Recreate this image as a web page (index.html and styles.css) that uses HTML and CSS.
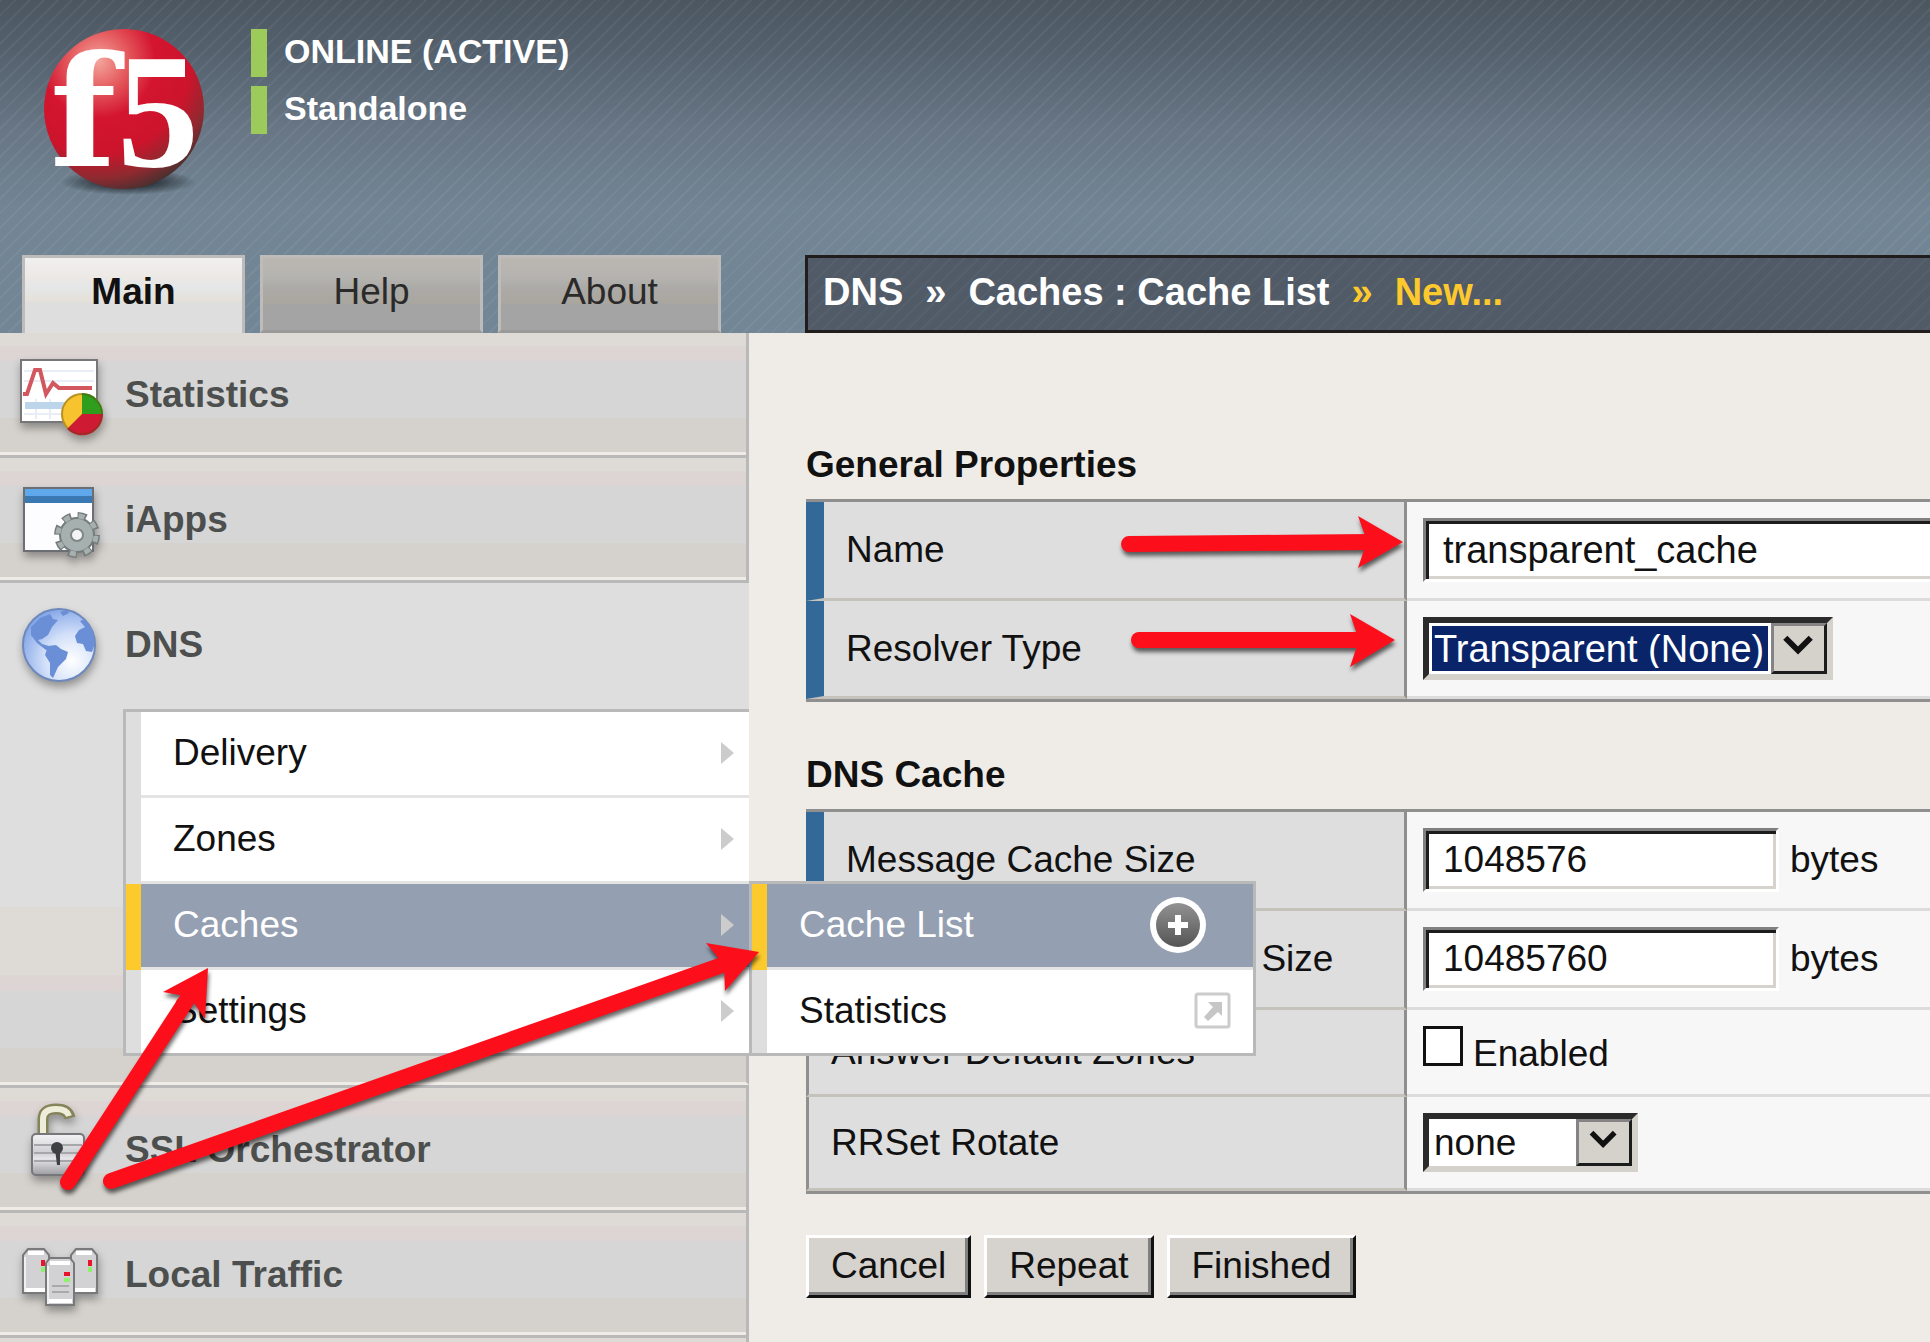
FILE: index.html
```html
<!DOCTYPE html>
<html lang="en">
<head>
<meta charset="utf-8">
<title>DNS : Caches : Cache List : New</title>
<link rel="stylesheet" href="styles.css">
</head>
<body>
<div class="page">
  <header class="banner">
    <div class="brand">
      <svg class="logo" viewBox="0 0 176 176" role="img" aria-label="f5">
        <defs>
          <radialGradient id="ball" cx="0.34" cy="0.2" r="0.85">
            <stop offset="0" stop-color="#f4a59c"/>
            <stop offset="0.22" stop-color="#e4585c"/>
            <stop offset="0.42" stop-color="#d41530"/>
            <stop offset="0.68" stop-color="#cc142c"/>
            <stop offset="0.86" stop-color="#8e2a30"/>
            <stop offset="1" stop-color="#43302f"/>
          </radialGradient>
          <radialGradient id="ballShade">
            <stop offset="0.3" stop-color="#1d242a" stop-opacity="0.9"/>
            <stop offset="1" stop-color="#1d242a" stop-opacity="0"/>
          </radialGradient>
        </defs>
        <ellipse cx="92" cy="158" rx="68" ry="13" fill="url(#ballShade)"/>
        <circle cx="88" cy="85" r="80" fill="url(#ball)"/>
        <g fill="#fff" font-weight="bold">
          <text x="14" y="142" font-size="154" font-family="'DejaVu Serif', serif">f</text>
          <text x="81" y="142" font-size="164" font-family="'Liberation Serif', serif">5</text>
        </g>
      </svg>
      <div class="status">
        <p>ONLINE (ACTIVE)</p>
        <p>Standalone</p>
      </div>
    </div>
    <nav class="tabs" aria-label="Sections">
      <a class="tab tab-active" href="#main">Main</a>
      <a class="tab" href="#help">Help</a>
      <a class="tab" href="#about">About</a>
    </nav>
    <nav class="crumbs" aria-label="Breadcrumb">
      <span>DNS</span><span>»</span><span>Caches : Cache List</span><span class="crumb-new">»</span><span class="crumb-new">New...</span>
    </nav>
  </header>

  <aside class="sidebar">
    <ul class="nav">
      <li class="nav-item">
        <a class="nav-link" href="#statistics">
          <svg class="nav-icon" viewBox="0 0 96 101" aria-hidden="true">
            <rect x="9" y="16" width="76" height="62" fill="#fff" stroke="#77777a" stroke-width="2"/>
            <path d="M12 27h70M12 37h70M12 70h50M24 55v20M38 55v20" stroke="#e9edf6" stroke-width="2"/>
            <rect x="13" y="58" width="40" height="7" fill="#bdd5ea"/>
            <path d="M11 50h4l8-24h5l6 24 7-11 6 5h33" fill="none" stroke="#d2575e" stroke-width="4"/>
            <circle cx="70" cy="70" r="21" fill="#f7c430"/>
            <path d="M70 70V49a21 21 0 0 1 21 21z" fill="#2f9e1c"/>
            <path d="M70 70h21a21 21 0 0 1-36 15z" fill="#cf1a33"/>
            <circle cx="70" cy="70" r="20" fill="none" stroke="#5a4414" stroke-opacity="0.4" stroke-width="2"/>
          </svg>
          <span>Statistics</span>
        </a>
      </li>
      <li class="nav-item">
        <a class="nav-link" href="#iapps">
          <svg class="nav-icon" viewBox="0 0 96 101" aria-hidden="true">
            <rect x="12" y="19" width="69" height="63" fill="#fdfcff" stroke="#6b6e72" stroke-width="2"/>
            <rect x="13" y="20" width="67" height="7" fill="#5fa8ec"/>
            <rect x="13" y="27" width="67" height="7" fill="#3a78b4"/>
            <circle cx="65" cy="66" r="20" fill="none" stroke="#747b7b" stroke-width="6" stroke-dasharray="9 6.71"/>
            <circle cx="65" cy="66" r="17" fill="#a6b0af" stroke="#747b7b" stroke-width="2"/>
            <circle cx="65" cy="66" r="19" fill="none" stroke="#a6b0af" stroke-width="5" stroke-dasharray="6 8.92" stroke-dashoffset="-1"/>
            <circle cx="65" cy="66" r="6" fill="#f4f4f6" stroke="#7e8686" stroke-width="2"/>
          </svg>
          <span>iApps</span>
        </a>
      </li>
      <li class="nav-item nav-open">
        <a class="nav-link" href="#dns">
          <svg class="nav-icon" viewBox="0 0 96 101" aria-hidden="true">
            <defs>
              <radialGradient id="sea" cx="0.68" cy="0.72" r="0.75">
                <stop offset="0" stop-color="#fff"/>
                <stop offset="0.5" stop-color="#d3e0f9"/>
                <stop offset="1" stop-color="#86a8e8"/>
              </radialGradient>
            </defs>
            <circle cx="47" cy="51" r="36" fill="url(#sea)" stroke="#6d88bd" stroke-width="2"/>
            <path d="M19 33l9-9 10-4 3 5 5 1-6 7-4 8-6 4-4 1 4 4 7 2 2 5-5-1-9-7-6-8zM48 18l7-2 2 3-6 3zM36 52l8-1 5 4 7 3-2 7-8 8-5 11-3-3 0-12-5-8zM68 27l5-2 8 12 2 12-3 9-6-1-3-7-6-1-2-7 4-6 6-3z" fill="#6a8fd6"/>
          </svg>
          <span>DNS</span>
        </a>
        <ul class="menu">
          <li class="menu-item"><a href="#delivery">Delivery<i class="caret"></i></a></li>
          <li class="menu-item"><a href="#zones">Zones<i class="caret"></i></a></li>
          <li class="menu-item menu-selected"><a href="#caches">Caches<i class="caret"></i></a>
            <ul class="menu flyout">
              <li class="menu-item menu-selected"><a href="#cache-list">Cache List
                <svg class="add" viewBox="0 0 56 56" aria-hidden="true">
                  <defs><linearGradient id="disc" x2="0" y2="1"><stop stop-color="#929292"/><stop offset="1" stop-color="#555"/></linearGradient></defs>
                  <circle cx="28" cy="28" r="28" fill="#fff"/>
                  <circle cx="28" cy="28" r="22" fill="url(#disc)"/>
                  <path d="M28 18v20M18 28h20" stroke="#fff" stroke-width="6"/>
                </svg></a></li>
              <li class="menu-item"><a href="#cache-statistics">Statistics
                <svg class="external" viewBox="0 0 37 37" aria-hidden="true">
                  <rect x="2" y="2" width="33" height="33" rx="2" fill="#fff" stroke="#ccc" stroke-width="3"/>
                  <path d="M14 10h14v14l-4-4-10 9-4-4 9-10z" fill="#c6c6c6"/>
                </svg></a></li>
            </ul>
          </li>
          <li class="menu-item"><a href="#settings">Settings<i class="caret"></i></a></li>
        </ul>
      </li>
      <li class="nav-item">
        <a class="nav-link" href="#ssl">
          <svg class="nav-icon" viewBox="0 0 96 101" aria-hidden="true">
            <defs>
              <linearGradient id="metal" x2="0" y2="1"><stop stop-color="#f4f4f6"/><stop offset="0.45" stop-color="#cfcfd3"/><stop offset="0.6" stop-color="#e6e6ea"/><stop offset="1" stop-color="#9d9da1"/></linearGradient>
            </defs>
            <path d="M31 36V20q0-10 13-10 12 0 14 9" fill="none" stroke="#84835a" stroke-width="11"/>
            <path d="M31 36V20q0-10 13-10 11 0 13 7" fill="none" stroke="#eeedd9" stroke-width="6"/>
            <rect x="20" y="35" width="52" height="41" rx="4" fill="url(#metal)" stroke="#77777b" stroke-width="2"/>
            <path d="M22 46h48M22 54h48M22 62h48" stroke="#a6a6ab" stroke-width="2"/>
            <circle cx="45" cy="49" r="6" fill="#3f4044"/><path d="M43 50h5v16h-3z" fill="#3f4044"/>
          </svg>
          <span>SSL Orchestrator</span>
        </a>
      </li>
      <li class="nav-item">
        <a class="nav-link" href="#local-traffic">
          <svg class="nav-icon" viewBox="0 0 96 101" aria-hidden="true">
            <g stroke="#77797a" stroke-width="2" fill="#d2d2d4">
              <path d="M11 69V31l5-6h16l5 6v38z"/>
              <path d="M59 69V31l5-6h16l5 6v38z"/>
              <path d="M34 81V39l4-5h20l4 5v42z"/>
            </g>
            <path d="M13 66h20M63 66h20M36 77h24M16 29h16M64 29h16M38 39h20" stroke="#fff" stroke-width="4" fill="none"/>
            <path d="M13 68V33M36 80V42" stroke="#f0f0f2" stroke-width="2"/>
            <path d="M40 62h17M40 68h17" stroke="#a9a9ab" stroke-width="2"/>
            <path d="M29 36h4v6h-4zM76 36h4v6h-4zM52 48h6v4h-6z" fill="#e8142e"/>
            <path d="M29 43h4v5h-4zM76 43h4v5h-4zM52 54h6v4h-6z" fill="#8ef06c"/>
          </svg>
          <span>Local Traffic</span>
        </a>
      </li>
    </ul>
  </aside>

  <main class="content">
    <form>
      <h2>General Properties</h2>
      <table class="props">
        <tr>
          <th class="required" scope="row"><label for="name">Name</label></th>
          <td><input class="field field-wide" id="name" type="text" value="transparent_cache"></td>
        </tr>
        <tr>
          <th class="required" scope="row"><label for="resolver">Resolver Type</label></th>
          <td>
            <span class="picker picker-focus">
              <select id="resolver"><option>Transparent (None)</option></select>
              <svg class="picker-arrow" viewBox="0 0 50 46" aria-hidden="true"><path d="M11 12l13 13 13-13" fill="none" stroke="#111" stroke-width="6"/></svg>
            </span>
          </td>
        </tr>
      </table>

      <h2>DNS Cache</h2>
      <table class="props">
        <tr>
          <th class="required" scope="row"><label for="message-size">Message Cache Size</label></th>
          <td><span class="line"><input class="field" id="message-size" type="text" value="1048576"><span>bytes</span></span></td>
        </tr>
        <tr>
          <th class="required" scope="row"><label for="record-size">Resource Record Cache Size</label></th>
          <td><span class="line"><input class="field" id="record-size" type="text" value="10485760"><span>bytes</span></span></td>
        </tr>
        <tr>
          <th scope="row">Answer Default Zones</th>
          <td><label class="check"><input type="checkbox">Enabled</label></td>
        </tr>
        <tr>
          <th scope="row"><label for="rotate">RRSet Rotate</label></th>
          <td>
            <span class="picker">
              <select id="rotate"><option>none</option></select>
              <svg class="picker-arrow" viewBox="0 0 50 46" aria-hidden="true"><path d="M11 12l13 13 13-13" fill="none" stroke="#111" stroke-width="6"/></svg>
            </span>
          </td>
        </tr>
      </table>

      <div class="actions">
        <button type="button">Cancel</button>
        <button type="button">Repeat</button>
        <button type="button">Finished</button>
      </div>
    </form>
  </main>

  <svg class="arrows" width="1420" height="1220" viewBox="0 0 1420 1220" aria-hidden="true">
    <g fill="#fc0f1b" stroke="#fc0f1b">
      <path d="M1129 544L1370 542" stroke-width="16" stroke-linecap="round"/>
      <path d="M1403 542L1358 516 1367 541 1358 568z" stroke="none"/>
      <path d="M1139 640H1362" stroke-width="16" stroke-linecap="round"/>
      <path d="M1395 640L1350 614 1359 640 1350 667z" stroke="none"/>
      <path d="M68 1182L192 992" stroke-width="16" stroke-linecap="round"/>
      <path d="M208 968L163 992 190 997 205 1019z" stroke="none"/>
      <path d="M111 1181L728 963" stroke-width="16" stroke-linecap="round"/>
      <path d="M759 952L706 943 724 965 725 991z" stroke="none"/>
    </g>
  </svg>
</div>
</body>
</html>
```
FILE: styles.css
```css
*,
*::before,
*::after {
  box-sizing: border-box;
}

body {
  margin: 0;
  background: #efebe6;
  color: #111;
  font: 37px/44px "Liberation Sans", Arial, sans-serif;
}

ul {
  margin: 0;
  padding: 0;
  list-style: none;
}

a {
  color: inherit;
  text-decoration: none;
}

.page {
  position: relative;
  display: grid;
  grid-template-columns: 749px 1fr;
  grid-template-rows: auto 1fr;
  min-height: 100vh;
  overflow: hidden;
}

/* Banner */

.banner {
  grid-column: 1 / -1;
  display: grid;
  grid-template-columns: 805px 1fr;
  background:
    repeating-linear-gradient(135deg, rgba(255, 255, 255, 0.05) 0 2px, transparent 2px 10px),
    linear-gradient(#4b5660 0, #566370 60px, #687685 130px, #728594 210px, #728696 100%);
}

.brand {
  grid-column: 1 / -1;
  display: flex;
  align-items: flex-start;
  gap: 39px;
  height: 255px;
  padding: 24px 36px 0;
}

.logo {
  width: 176px;
  height: 176px;
}

.status {
  display: grid;
  gap: 9px;
  padding-top: 5px;
  color: #fff;
  font-size: 34px;
  font-weight: bold;
}

.status p {
  height: 48px;
  margin: 0;
  padding-left: 17px;
  border-left: 16px solid #9ccb5b;
}

.tabs {
  display: flex;
  gap: 15px;
  padding-left: 22px;
}

.tab {
  width: 223px;
  height: 78px;
  padding-top: 12px;
  border: 3px solid #bdbcba;
  border-bottom-color: #999;
  background: linear-gradient(#bab7b1 0, #b5b3b0 20px, #acaaa7 30px, #aaa69f 45px, #a4a4a4 47px);
  color: #2a2a2a;
  text-align: center;
}

.tab-active {
  border-bottom: 0;
  background: linear-gradient(#f0f0f0 0, #ece8e6 20px, #e4e6e7 30px, #e6e1da 42px, #dedede 45px);
  color: #111;
  font-weight: bold;
}

.crumbs {
  display: flex;
  gap: 22px;
  padding: 12px 0 0 15px;
  border: 3px solid #201d1c;
  border-right: 0;
  background:
    repeating-linear-gradient(135deg, rgba(255, 255, 255, 0.03) 0 2px, transparent 2px 10px),
    #505b67;
  color: #fff;
  font-size: 38px;
  font-weight: bold;
  white-space: nowrap;
}

.crumb-new {
  color: #fdc92c;
}

/* Sidebar */

.sidebar {
  display: flex;
  flex-direction: column;
}

.sidebar::after {
  content: "";
  flex: 1;
  border-right: 3px solid #b9b9b9;
  background: #dedad5;
}

.nav-item {
  border: 0 solid #b9b9b9;
  border-width: 0 3px 3px 0;
  background: linear-gradient(#dedad5 13px, #ddd5d3 13px 28px, #d6d6d6 28px 85px, #d5d2cd 85px);
}

.nav-link {
  display: flex;
  align-items: center;
  gap: 17px;
  height: 122px;
  padding: 4px 0 0 12px;
  border-bottom: 3px solid #efebe6;
  color: #4c4f4d;
  font-weight: bold;
}

.nav-icon {
  width: 96px;
  height: 101px;
  filter: drop-shadow(1px 5px 4px rgba(0, 0, 0, 0.35));
}

.nav-open {
  border-right: 0;
  background: linear-gradient(#dedede 324px, #dedad5 324px 392px, #ddd5d3 392px 408px, #d6d6d6 408px 465px, #d5d2cd 465px);
}

.nav-open > .nav-link {
  height: 126px;
  padding-bottom: 7px;
  border-bottom: 0;
}

.nav-open::after {
  content: "";
  display: block;
  height: 29px;
  border-right: 3px solid #b9b9b9;
  border-bottom: 3px solid #efebe6;
}

/* Menus */

.menu {
  margin-left: 123px;
  border: 3px solid #b9b9b9;
  border-right: 0;
  background: #fff;
  color: #111;
}

.menu-item {
  position: relative;
  border-left: 15px solid #dedede;
}

.menu-item > a {
  display: flex;
  align-items: center;
  height: 86px;
  padding: 0 0 2px 32px;
  border-bottom: 3px solid #e4e4e4;
}

.menu-item:last-child > a {
  height: 83px;
  border-bottom: 0;
}

.menu-selected {
  border-left-color: #fdca2e;
}

.menu-selected > a {
  background: #94a0b2;
  color: #fff;
}

.caret {
  margin: 0 15px 0 auto;
  border: 11px solid transparent;
  border-right: 0;
  border-left: 13px solid #ccc;
}

.flyout {
  position: absolute;
  z-index: 1;
  top: -3px;
  left: 100%;
  width: 507px;
  margin: 0;
  border-right: 3px solid #b9b9b9;
}

.add {
  width: 56px;
  margin: 0 47px 0 auto;
}

.external {
  width: 37px;
  margin: 0 22px 0 auto;
}

/* Form */

.content {
  padding: 110px 0 0 57px;
}

h2 {
  margin: 0 0 12px;
  font-size: 37px;
  line-height: 44px;
}

.props {
  width: 100%;
  margin-bottom: 51px;
  border: 0 solid #8f8f8f;
  border-width: 3px 0;
  border-spacing: 0;
  table-layout: fixed;
}

.props th {
  width: 601px;
  padding: 0 0 0 22px;
  border: 3px solid #8f8f8f;
  border-top: 0;
  border-bottom-color: #c5c2bb;
  background: #dedede;
  font-weight: normal;
  text-align: left;
}

.props .required {
  border-left: 18px solid #326998;
}

.props td {
  padding: 16px 0 16px 16px;
  border-bottom: 3px solid #dcdcdc;
  background: #f7f7f7;
}

.field {
  display: block;
  width: 356px;
  height: 64px;
  padding: 0 17px;
  border: 3px solid;
  border-color: #808080 #fff #fff #808080;
  background: #fff;
  box-shadow: inset 3px 3px #1c1c1c, inset -3px -3px #d6d2cd;
  color: #111;
  font: inherit;
}

.field-wide {
  width: 100%;
  border-right: 0;
  box-shadow: inset 3px 3px #1c1c1c, inset 0 -3px #d6d2cd;
  font-size: 38px;
}

.line {
  display: flex;
  align-items: center;
  gap: 11px;
}

.picker {
  display: flex;
  width: 215px;
  height: 59px;
  border: 6px solid;
  border-color: #2b2b2b #d5d2cc #d5d2cc #2b2b2b;
  background: #fff;
}

.picker select {
  flex: 1;
  min-width: 0;
  margin: 0;
  padding: 0 2px;
  border: 3px solid #fff;
  border-radius: 0;
  outline: 0;
  appearance: none;
  background: #fff;
  color: #111;
  font: inherit;
  line-height: 38px;
}

.picker-focus {
  width: 410px;
  height: 63px;
}

.picker-focus select {
  background: #0a246a;
  color: #fff;
  font-size: 38px;
}

.picker-arrow {
  width: 56px;
  height: 100%;
  border: 3px solid #1c1c1c;
  border-top-color: #858385;
  border-left-color: #858385;
  background: #d5d2cc;
}

.check {
  display: flex;
  align-items: baseline;
  gap: 10px;
  height: 52px;
}

.check input {
  width: 40px;
  height: 40px;
  margin: 0;
  border: 3px solid #111;
  appearance: none;
  background: #fff;
}

.actions {
  display: flex;
  gap: 13px;
  margin-top: -10px;
}

.actions button {
  height: 63px;
  padding: 0 22px 2px;
  border: 3px solid;
  border-color: #fff #111 #111 #fff;
  background: #d6d2cd;
  box-shadow: inset -3px -3px #808080;
  color: #111;
  font: inherit;
}

/* Callout arrows lie over the whole page */

.arrows {
  position: absolute;
  z-index: 2;
  top: 0;
  left: 0;
  filter: drop-shadow(1px 4px 2px rgba(0, 0, 0, 0.6));
  pointer-events: none;
}
```
